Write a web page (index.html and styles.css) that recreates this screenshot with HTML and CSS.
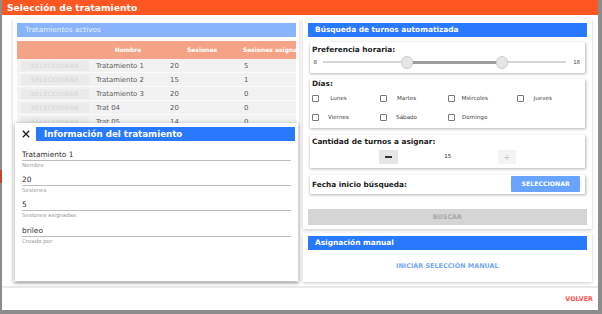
FILE: index.html
```html
<!DOCTYPE html>
<html lang="es">
<head>
<meta charset="utf-8">
<title>Selección de tratamiento</title>
<link rel="stylesheet" href="styles.css">
</head>
<body>
<div class="backdrop-mark"></div>
<div class="modal">
  <div class="modal-title">Selección de tratamiento</div>
  <div class="modal-body">
    <section class="card card-left">
      <div class="bar bar-faded">Tratamientos activos</div>
      <div class="table-wrap">
        <div class="trow thead">
          <div class="cell"></div>
          <div class="cell center">Nombre</div>
          <div class="cell center">Sesiones</div>
          <div class="cell center">Sesiones asignadas</div>
        </div>
        <div class="trow">
          <div class="cell"><span class="row-btn">SELECCIONAR</span></div>
          <div class="cell">Tratamiento 1</div><div class="cell">20</div><div class="cell">5</div>
        </div>
        <div class="trow">
          <div class="cell"><span class="row-btn">SELECCIONAR</span></div>
          <div class="cell">Tratamiento 2</div><div class="cell">15</div><div class="cell">1</div>
        </div>
        <div class="trow">
          <div class="cell"><span class="row-btn">SELECCIONAR</span></div>
          <div class="cell">Tratamiento 3</div><div class="cell">20</div><div class="cell">0</div>
        </div>
        <div class="trow">
          <div class="cell"><span class="row-btn">SELECCIONAR</span></div>
          <div class="cell">Trat 04</div><div class="cell">20</div><div class="cell">0</div>
        </div>
        <div class="trow">
          <div class="cell"><span class="row-btn">SELECCIONAR</span></div>
          <div class="cell">Trat 05</div><div class="cell">14</div><div class="cell">0</div>
        </div>
      </div>

      <div class="info-panel">
        <div class="info-head">
          <svg class="close-icon" width="8" height="8" viewBox="0 0 8 8"><path d="M0.8 0.8L7.2 7.2M7.2 0.8L0.8 7.2" stroke="#1e1e1e" stroke-width="1.3" fill="none"/></svg>
          <div class="bar bar-info">Información del tratamiento</div>
        </div>
        <div class="field"><div class="field-value">Tratamiento 1</div><div class="field-label">Nombre</div></div>
        <div class="field"><div class="field-value">20</div><div class="field-label">Sesiones</div></div>
        <div class="field"><div class="field-value">5</div><div class="field-label">Sesiones asignadas</div></div>
        <div class="field"><div class="field-value">brileo</div><div class="field-label">Creado por</div></div>
      </div>
    </section>

    <div class="right-col">
      <section class="card card-auto">
        <div class="bar bar-blue">Búsqueda de turnos automatizada</div>
        <div class="sub sub-pref">
          <div class="sub-title">Preferencia horaria:</div>
          <div class="slider-row">
            <span class="slider-num">8</span>
            <div class="track">
              <div class="track-range" style="left:34.5%;width:39.1%"></div>
              <span class="thumb" style="left:34.5%"></span>
              <span class="thumb" style="left:73.6%"></span>
            </div>
            <span class="slider-num">18</span>
          </div>
        </div>
        <div class="sub sub-days">
          <div class="sub-title">Días:</div>
          <div class="days-grid">
            <div class="day"><span class="check"></span><span class="day-label">Lunes</span></div>
            <div class="day"><span class="check"></span><span class="day-label">Martes</span></div>
            <div class="day"><span class="check"></span><span class="day-label">Miércoles</span></div>
            <div class="day"><span class="check"></span><span class="day-label">Jueves</span></div>
            <div class="day"><span class="check"></span><span class="day-label">Viernes</span></div>
            <div class="day"><span class="check"></span><span class="day-label">Sábado</span></div>
            <div class="day"><span class="check"></span><span class="day-label">Domingo</span></div>
          </div>
        </div>
        <div class="sub sub-qty">
          <div class="sub-title">Cantidad de turnos a asignar:</div>
          <div class="stepper">
            <span class="step step-minus"><span class="minus-bar"></span></span>
            <span class="step-value">15</span>
            <span class="step step-plus">+</span>
          </div>
        </div>
        <div class="sub sub-date">
          <div class="sub-title">Fecha inicio búsqueda:</div>
          <span class="btn-select">SELECCIONAR</span>
        </div>
        <div class="btn-search">BUSCAR</div>
      </section>

      <section class="card card-manual">
        <div class="bar bar-blue">Asignación manual</div>
        <div class="manual-link-row"><span class="manual-link">INICIAR SELECCIÓN MANUAL</span></div>
      </section>
    </div>
  </div>
  <div class="modal-divider"></div>
  <div class="modal-footer"><span class="btn-back">VOLVER</span></div>
</div>
</body>
</html>
```

FILE: styles.css
```css
* { box-sizing: border-box; }
html, body { margin: 0; padding: 0; }
body {
  width: 602px;
  height: 314px;
  background: #8d8d8d;
  font-family: "DejaVu Sans", "Liberation Sans", sans-serif;
  position: relative;
  overflow: hidden;
}
.backdrop-mark {
  position: absolute;
  z-index: 0;
  left: 0;
  top: 170px;
  width: 2px;
  height: 13px;
  background: #c2462a;
}
.modal {
  margin-left: 2px;
  width: 596px;
  height: 310px;
  background: #fff;
  display: flex;
  flex-direction: column;
  position: relative;
  z-index: 1;
}
.modal-title {
  height: 15px;
  flex: none;
  background: #ff5722;
  color: #fff;
  font-weight: bold;
  font-size: 9.2px;
  line-height: 15px;
  padding-left: 5px;
  white-space: nowrap;
}
.modal-body {
  height: 271px;
  flex: none;
  display: flex;
  gap: 4px;
  padding: 4px 8px 4px 11px;
}
.modal-divider {
  height: 2px;
  flex: none;
  background: #e9e9e9;
}
.modal-footer {
  flex: 1;
  display: flex;
  align-items: center;
  justify-content: flex-end;
  padding-right: 5px;
}
.btn-back {
  color: #ff5252;
  font-weight: bold;
  font-size: 6.4px;
}

.card {
  background: #fff;
  box-shadow: 0 1px 3px rgba(0,0,0,0.22);
}
.bar {
  color: #fff;
  white-space: nowrap;
  overflow: hidden;
}
.bar-faded {
  background: #89b4fb;
  color: #e6efff;
  height: 13.5px;
  line-height: 13.5px;
  font-size: 7.3px;
  padding-left: 8px;
}
.bar-blue {
  background: #2979ff;
  height: 13.5px;
  line-height: 13.5px;
  font-size: 7.4px;
  font-weight: bold;
  padding-left: 7px;
}

/* left card */
.card-left {
  flex: 1;
  position: relative;
  padding: 4px 3px 0 4px;
}
.table-wrap {
  margin-top: 4px;
  overflow: hidden;
  width: 279px;
}
.trow {
  display: grid;
  grid-template-columns: 74px 74px 74px 74px;
  width: 296px;
  height: 14px;
  background: #f2f2f2;
  border-bottom: 1px solid #fbfbfb;
  font-size: 6.9px;
  color: #595959;
  align-items: center;
}
.trow.thead {
  height: 18.6px;
  background: #f5a387;
  color: #fff;
  font-weight: bold;
  font-size: 6px;
  border-bottom: none;
}
.cell {
  padding-left: 5px;
  white-space: nowrap;
}
.cell.center {
  padding-left: 0;
  text-align: center;
}
.row-btn {
  display: block;
  margin-left: -1.5px;
  width: 68.5px;
  height: 10px;
  line-height: 10px;
  background: #ebebeb;
  color: #dcdcdc;
  font-weight: bold;
  font-size: 6.2px;
  text-align: center;
}

.info-panel {
  position: absolute;
  left: 2px;
  right: 1px;
  top: 104px;
  bottom: 1px;
  background: #fff;
  box-shadow: 0 1px 4px rgba(0,0,0,0.4);
  padding: 4.3px 3px 0 7px;
}
.info-head {
  display: flex;
  align-items: center;
  gap: 6px;
}
.close-icon { flex: none; }
.bar-info {
  flex: 1;
  background: #2979ff;
  height: 14px;
  line-height: 14px;
  font-size: 8.7px;
  font-weight: bold;
  padding-left: 8px;
}
.info-head + .field { margin-top: 8.3px; }
.field {
  margin-right: 4px;
  margin-bottom: 6.33px;
}
.field-value {
  height: 10px;
  line-height: 10px;
  font-size: 7.4px;
  color: #333;
  border-bottom: 1px solid #bdbdbd;
  box-sizing: content-box;
}
.field-label {
  height: 8px;
  line-height: 8px;
  font-size: 5.5px;
  color: #9e9e9e;
}

/* right column */
.right-col {
  flex: 1;
  display: flex;
  flex-direction: column;
  gap: 3.5px;
}
.card-auto {
  height: 210px;
  padding: 4.3px 5px 4px;
}
.sub {
  margin: 0 2px;
  background: #fff;
  box-shadow: 0.5px 1px 3px rgba(0,0,0,0.3);
  border-radius: 1px;
}
.sub-title {
  font-weight: bold;
  font-size: 7.35px;
  color: #222;
  white-space: nowrap;
}
.sub-pref {
  margin-top: 5.5px;
  height: 31px;
  padding: 2.3px 0 0 2px;
}
.sub-pref .sub-title { line-height: 10px; }
.slider-row {
  margin-top: 1.7px;
  height: 12px;
  display: flex;
  align-items: center;
  padding: 0 4.7px 0 1.5px;
}
.slider-num {
  font-size: 5.4px;
  color: #444;
}
.track {
  flex: 1;
  position: relative;
  height: 2px;
  background: #d7d7d7;
  margin: 0 7px 0 6.5px;
}
.track-range {
  position: absolute;
  top: -0.5px;
  height: 3px;
  background: #9d9d9d;
}
.thumb {
  position: absolute;
  top: 50%;
  width: 12.5px;
  height: 12.5px;
  margin: -6.25px 0 0 -6.25px;
  border-radius: 50%;
  background: #e6e6e6;
  border: 1px solid #cdcdcd;
}
.sub-days {
  margin-top: 5.7px;
  height: 49px;
  padding: 1px 0 0 2px;
}
.sub-days .sub-title { line-height: 8px; }
.days-grid {
  margin-top: 1px;
  display: grid;
  grid-template-columns: repeat(4, 68.1px);
  grid-auto-rows: 19px;
  padding-left: 0.3px;
}
.day {
  display: flex;
  align-items: center;
}
.check {
  width: 7px;
  height: 7px;
  border: 1px solid #777;
  border-radius: 1px;
  flex: none;
}
.day-label {
  width: 38.4px;
  text-align: center;
  font-size: 5.6px;
  color: #444;
}
.sub-qty {
  margin-top: 7.3px;
  height: 32.3px;
  padding: 2.2px 0 0 2px;
}
.sub-qty .sub-title { line-height: 9px; }
.stepper {
  margin: 3.8px auto 0;
  width: 137px;
  height: 13.3px;
  display: flex;
  position: relative;
  left: -1px;
}
.step {
  display: flex;
  align-items: center;
  justify-content: center;
}
.step-minus {
  width: 19px;
  background: #e6e6e6;
}
.minus-bar {
  width: 7px;
  height: 1.5px;
  background: #333;
}
.step-value {
  flex: 1;
  text-align: center;
  font-size: 5.6px;
  line-height: 13.3px;
  color: #333;
}
.step-plus {
  width: 18px;
  background: #f4f4f4;
  color: #c8c8c8;
  font-size: 9px;
}
.sub-date {
  margin-top: 7.7px;
  height: 18.3px;
  display: flex;
  align-items: center;
  justify-content: space-between;
  padding: 0 4.7px 0 2px;
}
.btn-select {
  width: 68.6px;
  height: 16px;
  line-height: 16px;
  margin-top: -1px;
  background: #67a3ff;
  color: #fff;
  font-weight: bold;
  font-size: 6.2px;
  text-align: center;
  border-radius: 1px;
}
.btn-search {
  margin-top: 15px;
  height: 16.7px;
  line-height: 16.7px;
  background: #d5d5d5;
  color: #a8a8a8;
  font-weight: bold;
  font-size: 6.4px;
  text-align: center;
}
.card-manual {
  height: 49px;
  padding: 3.5px 5px 0;
}
.card-manual .bar-blue { height: 14px; line-height: 14px; }
.manual-link-row {
  height: 31px;
  display: flex;
  align-items: center;
  justify-content: center;
}
.manual-link {
  color: #78a7f2;
  font-weight: bold;
  font-size: 6.43px;
}
```
